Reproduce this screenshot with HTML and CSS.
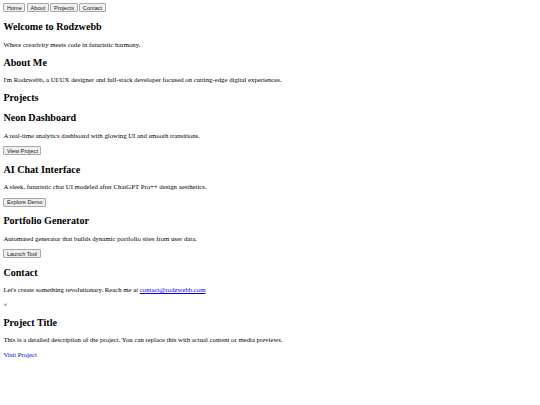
FILE: index.html
```html
<!DOCTYPE html>
<html lang="en">
<head>
<meta charset="utf-8">
<title>Rodzwebb</title>
<link rel="stylesheet" href="styles.css">
</head>
<body>
<nav class="nav">
  <button class="btn">Home</button>
  <button class="btn">About</button>
  <button class="btn">Projects</button>
  <button class="btn">Contact</button>
</nav>
<section class="section">
  <h1 class="title">Welcome to Rodzwebb</h1>
  <p class="text">Where creativity meets code in futuristic harmony.</p>
</section>
<section class="section">
  <h2 class="heading">About Me</h2>
  <p class="text">I'm Rodzwebb, a UI/UX designer and full-stack developer focused on cutting-edge digital experiences.</p>
</section>
<section class="section">
  <h2 class="heading">Projects</h2>
  <div class="card">
    <h3 class="card-title">Neon Dashboard</h3>
    <p class="text">A real-time analytics dashboard with glowing UI and smooth transitions.</p>
    <button class="btn">View Project</button>
  </div>
  <div class="card">
    <h3 class="card-title">AI Chat Interface</h3>
    <p class="text">A sleek, futuristic chat UI modeled after ChatGPT Pro++ design aesthetics.</p>
    <button class="btn">Explore Demo</button>
  </div>
  <div class="card">
    <h3 class="card-title">Portfolio Generator</h3>
    <p class="text">Automated generator that builds dynamic portfolio sites from user data.</p>
    <button class="btn">Launch Tool</button>
  </div>
</section>
<section class="section">
  <h2 class="heading">Contact</h2>
  <p class="text">Let's create something revolutionary. Reach me at <a class="link" href="#">contact@rodzwebb.com</a></p>
</section>
<div class="modal">
  <span class="close">&times;</span>
  <h2 class="card-title">Project Title</h2>
  <p class="text">This is a detailed description of the project. You can replace this with actual content or media previews.</p>
  <a class="link" href="#">Visit Project</a>
</div>
</body>
</html>
```
FILE: styles.css
```css
html {
  background: #ffffff;
}
body {
  margin: 3.375px;
  font-family: "Liberation Serif", "Times New Roman", serif;
  font-size: 6.75px;
  line-height: 7.45px;
  color: #000000;
}
.btn {
  font-family: "Liberation Sans", Arial, sans-serif;
  font-size: 5.625px;
  line-height: 6.3px;
  color: #1a1a1a;
  background: #efefef;
  border: 1px solid #a8a8a8;
  border-radius: 1px;
  padding: 0.4px 2.5px;
  margin: 0;
}
.title {
  font-size: 10.125px;
  line-height: 11.45px;
  margin: 8.4px 0;
}
.heading {
  font-size: 10.125px;
  line-height: 11.45px;
  margin: 8.4px 0;
}
.card-title {
  font-size: 10.125px;
  line-height: 11.45px;
  margin: 8.4px 0;
}
.text {
  margin: 6.75px 0;
}
.link {
  color: #0000ee;
}
.close {
  display: block;
}
```
